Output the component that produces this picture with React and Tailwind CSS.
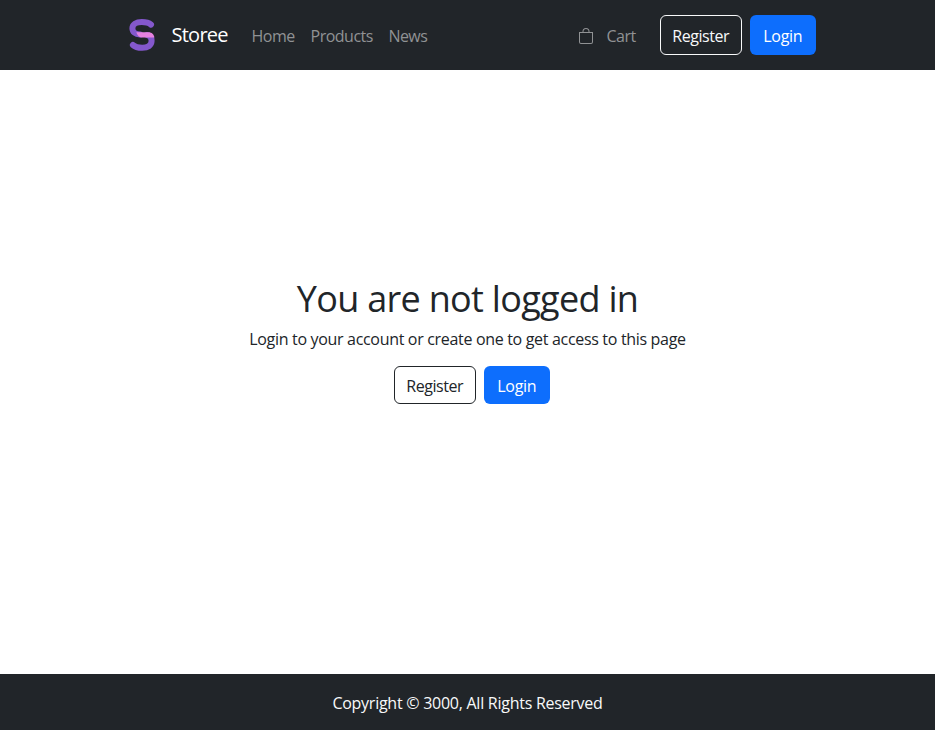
import React from "react";
import { BsBag } from "react-icons/bs";

function Logo() {
  return (
    <svg className="h-8 w-[26px] shrink-0" viewBox="0 0 26 32" fill="none">
      <path d="M22 5.6C20 3.9 17 3.1 12.8 3.1C7 3.1 3.4 5.4 3.4 9.2C3.4 13 6.5 15.4 11 15.6" stroke="#8458cc" strokeWidth="6" strokeLinecap="round" />
      <path d="M18 16C21 16.4 22.6 18.8 22.6 21.8C22.6 26.3 19 28.8 13.2 28.8C9 28.8 6 28 3.9 26" stroke="#8458cc" strokeWidth="6" strokeLinecap="round" />
      <path d="M7.3 13.2H19.5C22.8 13.2 25 15.4 25.4 18.6H13C10.4 18.6 8.4 16.6 7.3 13.2Z" fill="#e681df" />
    </svg>
  );
}

export default function App() {
  return (
    <div className="flex h-screen flex-col bg-white font-['Open_Sans','Noto_Sans',sans-serif] text-base leading-6 text-[#212529]">
      <header className="h-[70px] shrink-0 bg-[#212529]">
        <div className="mx-auto flex h-full w-[696px] items-center">
          <a className="ml-[9px] flex items-center">
            <Logo />
            <span className="ml-[17px] w-[56px] whitespace-nowrap text-xl leading-[30px] tracking-[-0.75px] text-white">Storee</span>
          </a>
          <nav className="ml-6 flex gap-4 pt-0.5 text-[#909294]">
            <a className="w-[43px] whitespace-nowrap tracking-[-0.5px]">Home</a>
            <a className="w-[62px] whitespace-nowrap tracking-[-0.5px]">Products</a>
            <a className="whitespace-nowrap tracking-[-0.6px]">News</a>
          </nav>
          <div className="ml-auto flex items-center">
            <a className="mr-6 flex items-center gap-[13px] pt-0.5 text-[#909294]">
              <BsBag className="size-4" />
              <span className="w-[29px] whitespace-nowrap tracking-[-0.5px]">Cart</span>
            </a>
            <button className="mr-2 flex h-10 w-[82.5px] items-center justify-center rounded-md border border-[#f8f9fa] pt-0.5 tracking-[-0.45px] text-[#f8f9fa]">Register</button>
            <button className="flex h-10 w-[65.5px] items-center justify-center rounded-md bg-[#0d6efd] pt-0.5 tracking-[-0.35px] text-white">Login</button>
          </div>
        </div>
      </header>
      <main className="flex flex-1 flex-col items-center pt-[207px]">
        <h1 className="mb-[7px] whitespace-nowrap text-[36px] leading-[43px] tracking-[-0.7px]">You are not logged in</h1>
        <p className="mb-[14.5px] whitespace-nowrap tracking-[-0.32px]">Login to your account or create one to get access to this page</p>
        <div className="ml-2 flex gap-2">
          <button className="flex h-[38px] w-[82.5px] items-center justify-center rounded-md border border-[#212529] pt-0.5 tracking-[-0.45px]">Register</button>
          <button className="flex h-[38px] w-[65.5px] items-center justify-center rounded-md bg-[#0d6efd] pt-0.5 tracking-[-0.35px] text-white">Login</button>
        </div>
      </main>
      <footer className="flex h-14 shrink-0 items-center justify-center bg-[#212529] pt-0.5 text-[#f8f9fa]">
        <span className="whitespace-nowrap tracking-[-0.26px]">Copyright © 3000, All Rights Reserved</span>
      </footer>
    </div>
  );
}
